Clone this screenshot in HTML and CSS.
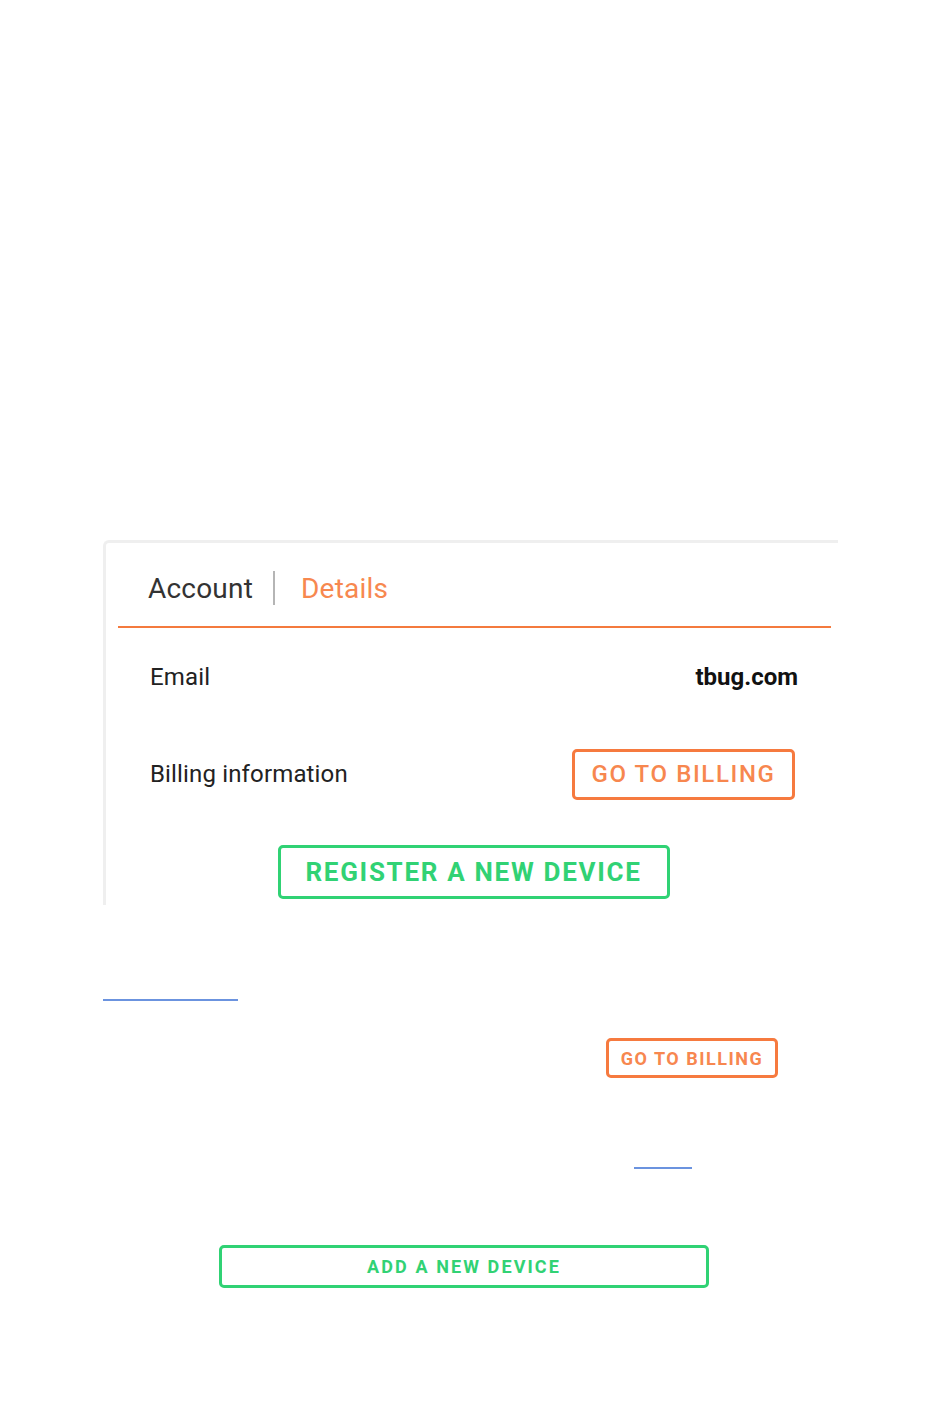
FILE: index.html
```html
<!DOCTYPE html>
<html lang="en">
<head>
<meta charset="utf-8">
<title>Account details</title>
<link rel="stylesheet" href="styles.css">
</head>
<body>
<div class="page">
  <section class="card">
    <div class="tabs">
      <span class="tab">Account</span>
      <span class="tab-sep"></span>
      <span class="tab tab-active">Details</span>
    </div>
    <div class="row row-email">
      <span class="label">Email</span>
      <span class="value">tbug.com</span>
    </div>
    <div class="row row-billing">
      <span class="label">Billing information</span>
      <button class="btn btn-orange">GO TO BILLING</button>
    </div>
    <div class="row-center">
      <button class="btn btn-green btn-register">REGISTER A NEW DEVICE</button>
    </div>
  </section>

  <div class="plain">
    <div class="link-line link-line-1"></div>
    <div class="plain-billing">
      <button class="btn btn-orange btn-small">GO TO BILLING</button>
    </div>
    <div class="link-line link-line-2"></div>
    <button class="btn btn-green btn-add">ADD A NEW DEVICE</button>
  </div>
</div>
</body>
</html>
```

FILE: styles.css
```css
* { box-sizing: border-box; }
html, body { margin: 0; padding: 0; background: #ffffff; }
body { font-family: Roboto, "Noto Sans", "Liberation Sans", sans-serif; color: #222; }

.page { width: 950px; height: 1420px; padding-top: 540px; }

.card {
  margin-left: 103px;
  width: 735px;
  height: 365px;
  border-top: 3px solid #efefef;
  border-left: 3px solid #efefef;
  border-top-left-radius: 6px;
  overflow: hidden;
}

.tabs {
  margin: 0 7px 0 12px;
  height: 85px;
  border-bottom: 2px solid #f47a3e;
  display: flex;
  align-items: center;
  padding-left: 30px;
  padding-top: 7px;
}
.tab { font-size: 28px; color: #333; letter-spacing: 0.2px; }
.tab-active { color: #f7884f; }
.tab-sep { width: 2px; height: 34px; background: #b5b5b5; margin: 0 26px 0 20px; }

.row {
  display: flex;
  align-items: center;
  justify-content: space-between;
  padding-left: 44px;
}
.row-email { height: 66px; margin-top: 16px; padding-right: 40px; }
.row-billing { height: 64px; margin-top: 32px; padding-right: 43px; }
.label { font-size: 24px; color: #222; letter-spacing: 0.15px; }
.value { font-size: 24px; font-weight: 700; color: #111; letter-spacing: 0; }

.row-center { display: flex; justify-content: center; margin-top: 39px; padding-left: 3px; }

.btn {
  font-family: Roboto, "Noto Sans", "Liberation Sans", sans-serif;
  background: #fff;
  border-radius: 5px;
  cursor: pointer;
  padding: 0;
}
.btn-orange {
  width: 223px;
  height: 51px;
  border: 3px solid #f67a3f;
  color: #f7874f;
  font-size: 24px;
  font-weight: 500;
  letter-spacing: 1.6px;
}
.btn-green {
  border: 3px solid #30d274;
  color: #31d274;
}
.btn-register {
  width: 392px;
  height: 54px;
  font-size: 26px;
  font-weight: 700;
  letter-spacing: 1.7px;
}

.plain { padding-left: 103px; }
.link-line { height: 2px; background: #6b93df; }
.link-line-1 { width: 135px; margin-top: 94px; }
.plain-billing { margin-top: 37px; padding-left: 503px; }
.btn-small {
  width: 172px;
  height: 40px;
  font-size: 18px;
  font-weight: 700;
  letter-spacing: 1.5px;
}
.link-line-2 { width: 58px; margin-top: 89px; margin-left: 531px; }
.btn-add {
  display: block;
  margin-top: 76px;
  margin-left: 116px;
  width: 490px;
  height: 43px;
  font-size: 18px;
  font-weight: 700;
  letter-spacing: 2.1px;
}
```
